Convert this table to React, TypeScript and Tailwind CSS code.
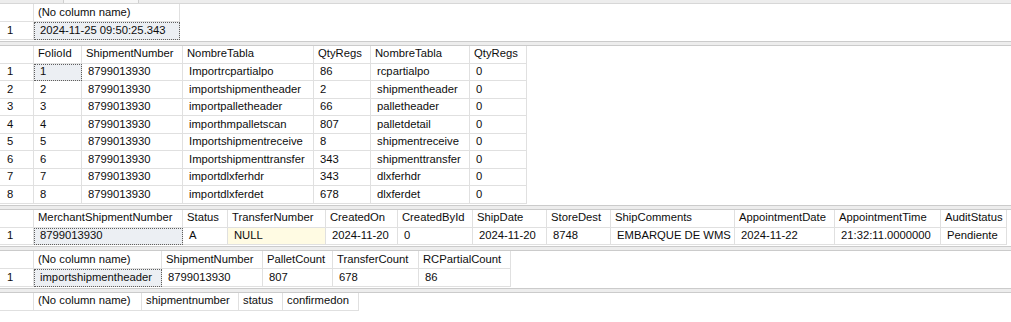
import React from "react";

type Col = { name: string; w: string };

interface GridProps {
  cols: Col[];
  rows: string[][];
  rowH?: string;
}

const line = "border-[#e0e0e0]";

function Grid({ cols, rows, rowH = "h-[17.5px]" }: GridProps) {
  return (
    <div className="flex flex-col">
      <div className="flex h-[18px]">
        <div className={`w-[34px] shrink-0 border-r border-b ${line}`} />
        {cols.map((c, i) => (
          <div
            key={i}
            className={`${c.w} shrink-0 border-r border-b ${line} flex items-center pl-[4px] whitespace-nowrap overflow-hidden`}
          >
            {c.name}
          </div>
        ))}
      </div>
      {rows.map((r, ri) => (
        <div key={ri} className={`flex ${rowH}`}>
          <div
            className={`w-[34px] shrink-0 border-r border-b ${line} flex items-center pl-[7px]`}
          >
            {ri + 1}
          </div>
          {r.map((v, ci) => {
            const sel = ri === 0 && ci === 0;
            const isNull = v === "NULL";
            return (
              <div
                key={ci}
                className={`${cols[ci].w} shrink-0 border-r border-b ${line} flex items-center pl-[6px] whitespace-nowrap overflow-hidden ${
                  sel
                    ? "bg-[#eceff3] outline-1 outline-dotted outline-[#5f5f5f] -outline-offset-1"
                    : ""
                } ${isNull ? "bg-[#fffbe3]" : ""}`}
              >
                {v}
              </div>
            );
          })}
        </div>
      ))}
    </div>
  );
}

function Splitter() {
  return (
    <div className="mt-[1px] h-[5px] w-full border-y border-[#cbcbcb] bg-[#ededed]" />
  );
}

const shipRows: string[][] = [
  ["1", "8799013930", "Importrcpartialpo", "86", "rcpartialpo", "0"],
  ["2", "8799013930", "importshipmentheader", "2", "shipmentheader", "0"],
  ["3", "8799013930", "importpalletheader", "66", "palletheader", "0"],
  ["4", "8799013930", "importhmpalletscan", "807", "palletdetail", "0"],
  ["5", "8799013930", "Importshipmentreceive", "8", "shipmentreceive", "0"],
  ["6", "8799013930", "Importshipmenttransfer", "343", "shipmenttransfer", "0"],
  ["7", "8799013930", "importdlxferhdr", "343", "dlxferhdr", "0"],
  ["8", "8799013930", "importdlxferdet", "678", "dlxferdet", "0"],
];

export default function App() {
  return (
    <div className="w-[1011px] h-[322px] overflow-hidden bg-white text-[11.25px] text-[#0d0d0d] font-['Liberation_Sans',Arial,sans-serif] leading-none">
      {/* tab strip fragment */}
      <div className="h-[4px] bg-[#ededed] border-b border-[#d7d7d7] flex">
        <div className="ml-[63px] w-[76px] border-x border-[#cfcfcf] bg-[#f6f6f6]" />
      </div>

      <Grid
        cols={[{ name: "(No column name)", w: "w-[146px]" }]}
        rows={[["2024-11-25 09:50:25.343"]]}
      />
      <Splitter />

      <Grid
        cols={[
          { name: "FolioId", w: "w-[48px]" },
          { name: "ShipmentNumber", w: "w-[101px]" },
          { name: "NombreTabla", w: "w-[131px]" },
          { name: "QtyRegs", w: "w-[57px]" },
          { name: "NombreTabla", w: "w-[99px]" },
          { name: "QtyRegs", w: "w-[57px]" },
        ]}
        rows={shipRows}
      />
      <Splitter />

      <Grid
        cols={[
          { name: "MerchantShipmentNumber", w: "w-[149px]" },
          { name: "Status", w: "w-[45px]" },
          { name: "TransferNumber", w: "w-[98px]" },
          { name: "CreatedOn", w: "w-[72px]" },
          { name: "CreatedById", w: "w-[75px]" },
          { name: "ShipDate", w: "w-[74px]" },
          { name: "StoreDest", w: "w-[64px]" },
          { name: "ShipComments", w: "w-[124px]" },
          { name: "AppointmentDate", w: "w-[100px]" },
          { name: "AppointmentTime", w: "w-[106px]" },
          { name: "AuditStatus", w: "w-[66px]" },
        ]}
        rows={[
          [
            "8799013930",
            "A",
            "NULL",
            "2024-11-20",
            "0",
            "2024-11-20",
            "8748",
            "EMBARQUE DE WMS",
            "2024-11-22",
            "21:32:11.0000000",
            "Pendiente",
          ],
        ]}
      />
      <Splitter />

      <Grid
        cols={[
          { name: "(No column name)", w: "w-[128px]" },
          { name: "ShipmentNumber", w: "w-[101px]" },
          { name: "PalletCount", w: "w-[70px]" },
          { name: "TransferCount", w: "w-[86px]" },
          { name: "RCPartialCount", w: "w-[92px]" },
        ]}
        rows={[["importshipmentheader", "8799013930", "807", "678", "86"]]}
      />
      <Splitter />

      <Grid
        cols={[
          { name: "(No column name)", w: "w-[108px]" },
          { name: "shipmentnumber", w: "w-[97px]" },
          { name: "status", w: "w-[44px]" },
          { name: "confirmedon", w: "w-[76px]" },
        ]}
        rows={[]}
      />
    </div>
  );
}
